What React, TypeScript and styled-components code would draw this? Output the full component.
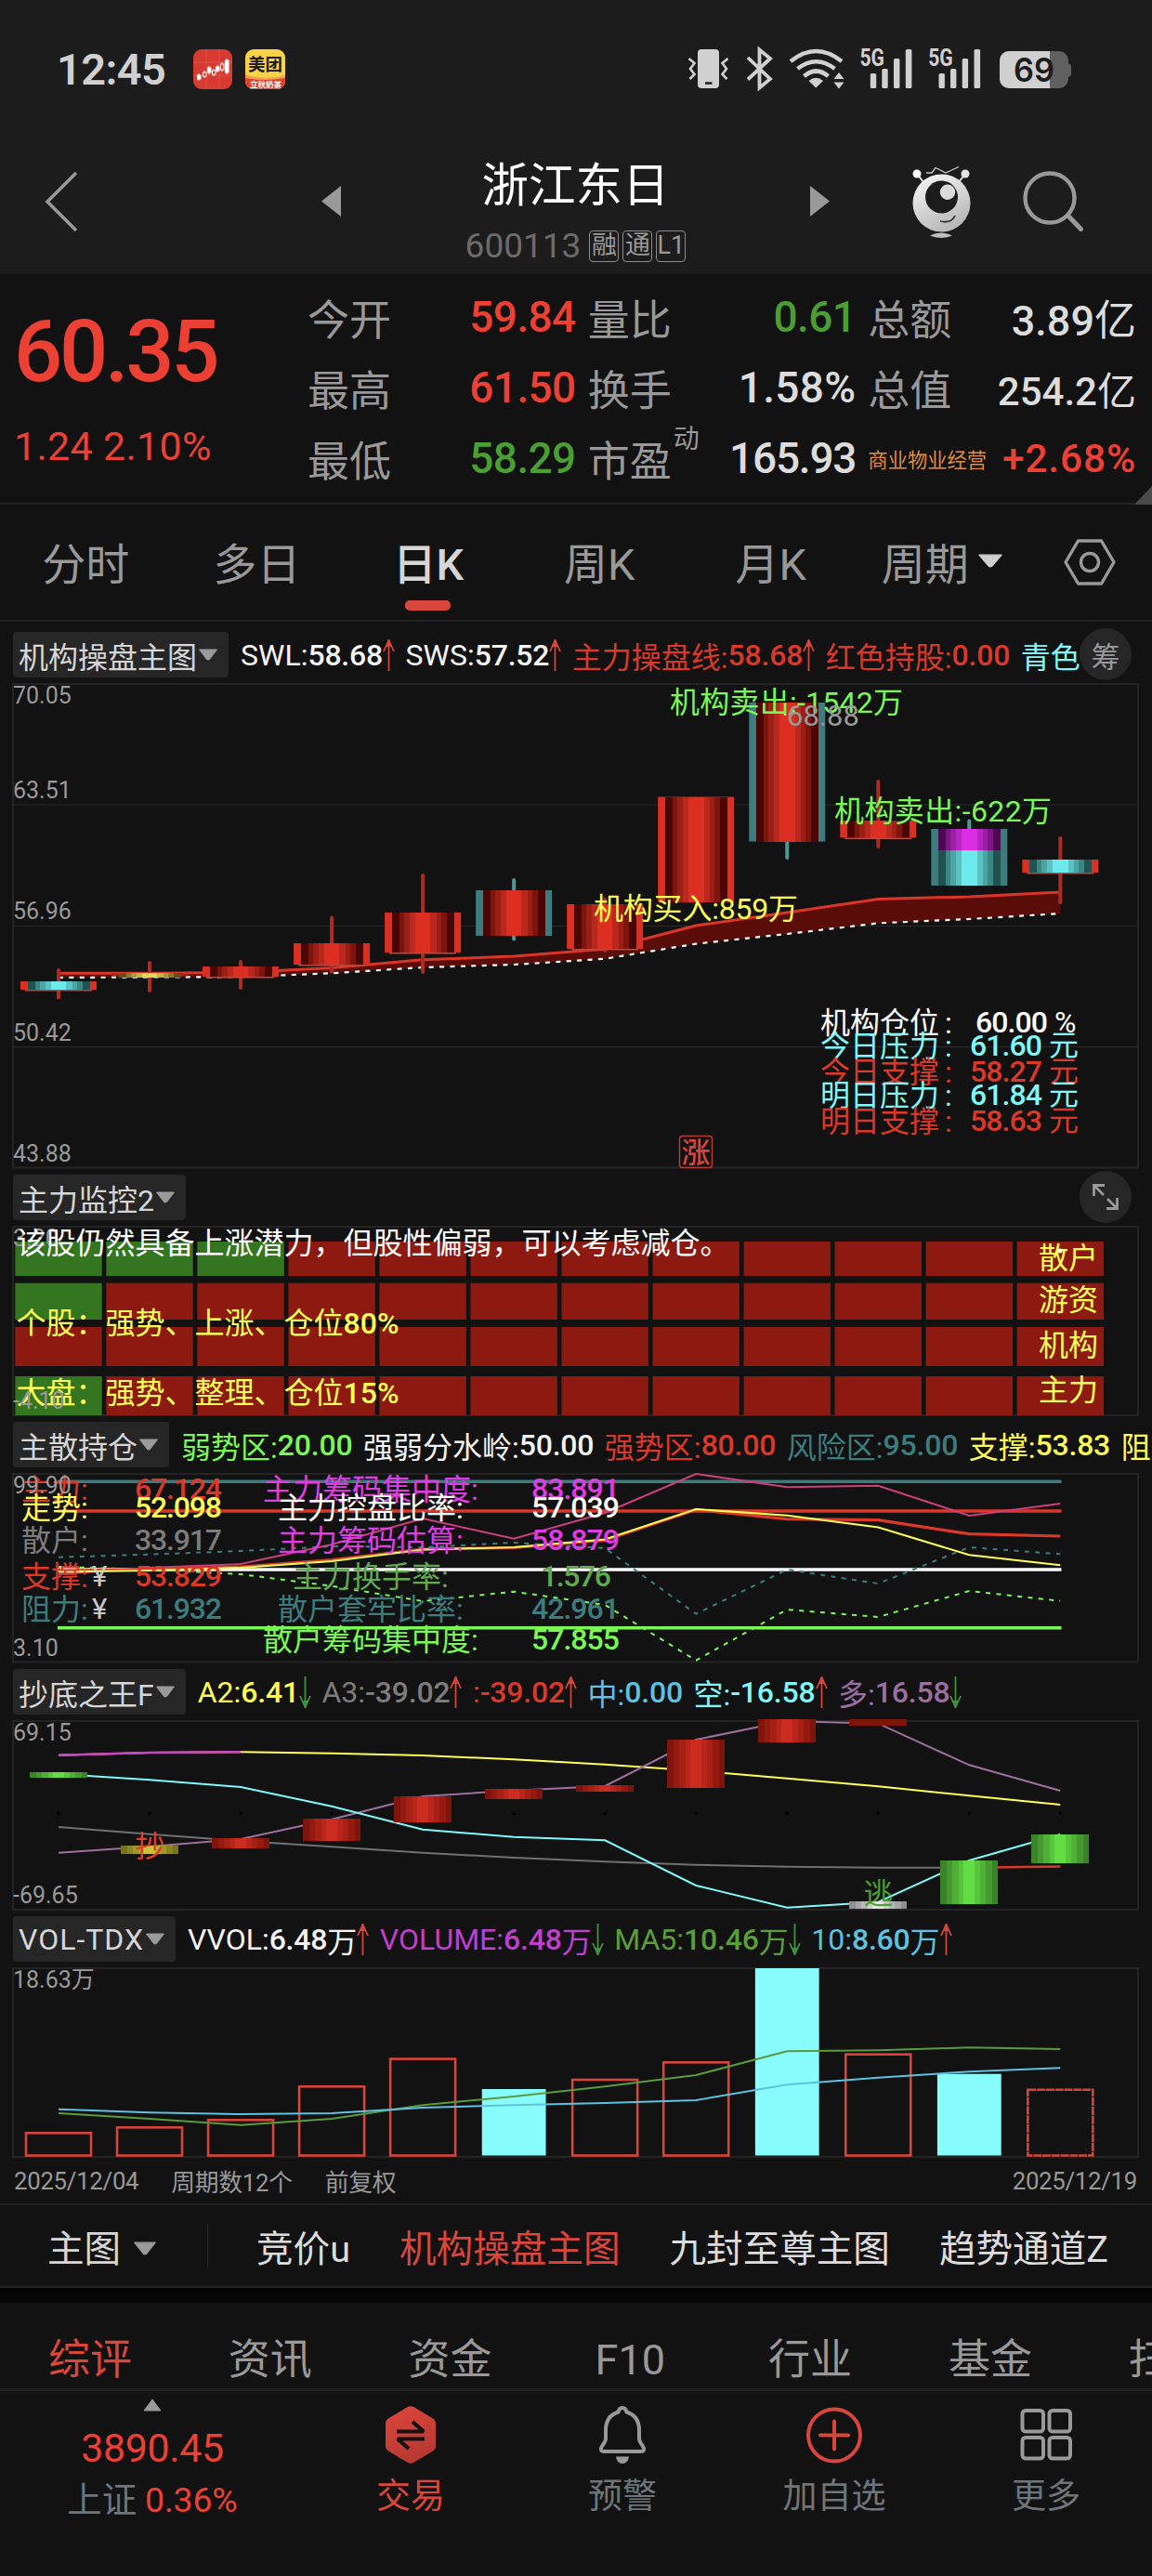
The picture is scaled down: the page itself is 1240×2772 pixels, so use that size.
import { Fragment, ReactNode } from "react";
import { createGlobalStyle, styled } from "styled-components";

const colors = {
  header: "#1c1c1c",
  page: "#121212",
  line: "#232323",
  chip: "#262626",
  text: "#d6d6d6",
  muted: "#999999",
  dim: "#6b6b6b",
  slate: "#6d757a",
  red: "#ec4034",
  softRed: "#d8463c",
  lineRed: "#dc382a",
  green: "#4a9e32",
  lime: "#7af855",
  yellow: "#ffff55",
  cyan: "#80f8fa",
  teal: "#3d7c7e",
  sky: "#5fc1e0",
  magenta: "#e03ce6",
  purple: "#9c6f9f",
  orange: "#df8b40",
};

const fontStack = `Roboto, "Noto Sans CJK SC", sans-serif`;

const GlobalStyle = createGlobalStyle`
  * {
    box-sizing: border-box;
  }

  body {
    margin: 0;
    background: ${colors.page};
    font-family: ${fontStack};
  }

  svg {
    display: block;
    flex: none;
  }
`;

const Page = styled.div`
  width: 1240px;
  height: 2772px;
  overflow: hidden;
  display: flex;
  flex-direction: column;
  background: ${colors.page};
  color: ${colors.text};
  white-space: nowrap;
`;

const StatusBar = styled.div`
  height: 148px;
  padding: 0 87px 0 61px;
  display: flex;
  align-items: center;
  background: ${colors.header};

  svg {
    overflow: visible;
  }
`;

const Clock = styled.div`
  width: 147px;
  font-size: 47px;
  font-weight: 600;
  letter-spacing: -0.6px;
  color: #d0d0d0;
`;

const StatusIcons = styled.div`
  margin-left: auto;
  display: flex;
  align-items: center;
`;

const AppIcons = styled.div`
  display: flex;
  gap: 14px;
`;

const Header = styled.header`
  height: 147px;
  padding: 0 74px 10px 47px;
  display: flex;
  align-items: center;
  background: ${colors.header};
`;

const StockNav = styled.div`
  margin-left: 261px;
  width: 547px;
  display: flex;
  align-items: center;
  justify-content: space-between;
`;

const StockName = styled.div`
  display: flex;
  flex-direction: column;
  align-items: center;
`;

const Title = styled.div`
  font-size: 50.5px;
  line-height: 60px;
  margin-top: 23px;
  color: #fff;
`;

const Code = styled.div`
  display: flex;
  align-items: center;
  gap: 4px;
  margin-top: 13px;
  font-size: 37px;
  line-height: 44px;
  color: ${colors.dim};

  & > span:first-child {
    margin-right: 5px;
  }
`;

const Badge = styled.span`
  width: 32px;
  height: 34px;
  border: 1.5px solid #8a8a8a;
  border-radius: 4px;
  font-size: 27px;
  line-height: 31px;
  text-align: center;
  color: ${colors.muted};
`;

const HeaderIcons = styled.div`
  margin-left: auto;
  display: flex;
  align-items: center;
  gap: 55px;
`;

const Quote = styled.section`
  height: 248px;
  padding: 8px 17px 0 15px;
  display: flex;
  border-bottom: 2px solid ${colors.line};
  position: relative;
`;

const Corner = styled.svg`
  position: absolute;
  right: 0;
  bottom: -2px;
`;

const PriceBlock = styled.div`
  width: 316px;
  padding-top: 26px;
  color: ${colors.red};
`;

const Price = styled.div`
  font-size: 92px;
  font-weight: 500;
  line-height: 100px;
  letter-spacing: -3.3px;
`;

const Change = styled.div`
  margin-top: 26px;
  font-size: 43px;
  line-height: 50px;
  letter-spacing: 0.3px;
`;

const StatGrid = styled.div`
  flex: 1;
  display: grid;
  grid-template-columns: repeat(3, 1fr);
  grid-auto-rows: 76px;
  column-gap: 13px;
`;

const Stat = styled.div`
  display: flex;
  align-items: center;
  justify-content: space-between;
`;

const StatName = styled.div<{ $small?: boolean }>`
  display: flex;
  font-size: ${p => (p.$small ? 21.3 : 45)}px;
  color: ${p => (p.$small ? colors.orange : colors.muted)};

  sup {
    margin: -8px 0 0 2px;
    font-size: 28px;
    line-height: 40px;
  }
`;

const StatValue = styled.div<{ $color: string; $size?: number; $spacing?: number }>`
  font-size: ${p => p.$size ?? 46}px;
  font-weight: 500;
  letter-spacing: ${p => p.$spacing ?? -0.6}px;
  color: ${p => p.$color};

  span {
    font-weight: 400;
  }
`;

const PeriodTabs = styled.nav`
  height: 126px;
  display: flex;
  border-bottom: 2px solid ${colors.line};
`;

const PeriodTab = styled.div<{ $active?: boolean }>`
  width: 184.4px;
  display: flex;
  align-items: center;
  justify-content: center;
  gap: 9px;
  padding-bottom: 4px;
  font-size: 47px;
  font-weight: ${p => (p.$active ? 500 : 400)};
  color: ${p => (p.$active ? colors.text : colors.muted)};
  position: relative;

  &::after {
    content: "";
    display: ${p => (p.$active ? "block" : "none")};
    position: absolute;
    bottom: 10px;
    width: 49px;
    height: 11px;
    border-radius: 5px;
    background: ${colors.softRed};
  }
`;

const SettingsTab = styled.div`
  flex: 1;
  display: flex;
  align-items: center;
  justify-content: center;
`;

const IndicatorBar = styled.div<{ $height: number; $top: number }>`
  height: ${p => p.$height}px;
  padding: ${p => p.$top}px 0 0 14px;
  display: flex;
  align-items: flex-start;
  position: relative;
`;

const Chip = styled.div<{ $spacing?: number }>`
  height: 49px;
  padding: 0 11px 0 6px;
  display: flex;
  align-items: center;
  gap: 1px;
  border-radius: 4px;
  background: ${colors.chip};
  font-size: 32px;
  letter-spacing: ${p => p.$spacing ?? 0}px;
`;

const Legend = styled.div`
  margin-left: 13px;
  height: 49px;
  display: flex;
  align-items: center;
  gap: 11.5px;
`;

const LegendItem = styled.div<{ $color: string }>`
  display: flex;
  align-items: center;
  font-size: 32px;
  color: ${p => p.$color};

  b {
    font-weight: 500;
    letter-spacing: -0.2px;
  }
`;

const RoundButton = styled.div<{ $top: number }>`
  position: absolute;
  right: 22px;
  top: ${p => p.$top}px;
  width: 56px;
  height: 56px;
  border-radius: 50%;
  display: flex;
  align-items: center;
  justify-content: center;
  background: ${colors.chip};
  color: ${colors.muted};
  font-size: 31px;
`;

const Plot = styled.svg`
  width: 1240px;
  overflow: visible;
  font-family: ${fontStack};
`;

const DateRow = styled.div`
  height: 49px;
  padding: 0 16px 0 15px;
  display: flex;
  align-items: center;
  font-size: 25.8px;
  letter-spacing: -0.3px;
  color: ${colors.muted};

  span {
    margin-right: 35px;
  }

  span:last-child {
    margin: 0 0 0 auto;
  }
`;

const Schemes = styled.div`
  height: 91px;
  display: flex;
  align-items: center;
  border-top: 2px solid ${colors.line};
  border-bottom: 2px solid ${colors.line};
  font-size: 39.6px;
`;

const SchemePicker = styled.div`
  width: 224px;
  height: 47px;
  padding-left: 51px;
  display: flex;
  align-items: center;
  gap: 13px;
  border-right: 1px solid #2a2a2a;

  svg {
    margin-top: 5px;
  }
`;

const SchemeList = styled.div`
  display: flex;
  gap: 53px;
  padding-left: 52px;
`;

const Scheme = styled.div<{ $active?: boolean }>`
  color: ${p => (p.$active ? colors.softRed : "#dcdcdc")};
`;

const Band = styled.div`
  height: 16px;
  background: #060606;
`;

const InfoTabs = styled.nav`
  height: 95px;
  padding-top: 31px;
  display: flex;
  border-bottom: 3px solid #1f1f1f;
`;

const InfoTab = styled.div<{ $active?: boolean }>`
  flex: 0 0 193.8px;
  text-align: center;
  font-size: 45px;
  line-height: 61px;
  color: ${p => (p.$active ? colors.softRed : colors.muted)};
`;

const BottomBar = styled.footer`
  flex: 1;
  display: flex;
`;

const IndexBox = styled.div`
  width: 328px;
  padding-top: 8px;
  display: flex;
  flex-direction: column;
  align-items: center;
`;

const IndexValue = styled.div`
  margin-top: 14px;
  font-size: 43px;
  line-height: 50px;
  letter-spacing: -0.4px;
  color: ${colors.red};
`;

const IndexChange = styled.div`
  margin-top: 6px;
  font-size: 37.5px;
  line-height: 50px;
  letter-spacing: -0.2px;
  color: ${colors.slate};

  span {
    color: ${colors.red};
  }
`;

const NavItem = styled.div<{ $active?: boolean }>`
  flex: 1;
  padding-top: 15px;
  display: flex;
  flex-direction: column;
  align-items: center;
  gap: 8px;
  font-size: 37px;
  line-height: 54px;
  color: ${p => (p.$active ? colors.softRed : colors.slate)};
`;

function Caret({ width = 22, height = 13, color = "#9a9a9a" }) {
  return (
    <svg
      width={width}
      height={height}
      viewBox="0 0 22 13"
      preserveAspectRatio="none"
    >
      <path
        d="M1.5 1h19l-8 10.5q-1.5 1-3 0z"
        fill={color}
        stroke={color}
        strokeLinejoin="round"
      />
    </svg>
  );
}

function Arrow({ down }: { down?: boolean }) {
  const color = down ? "#3f9140" : "#d4453b";
  return (
    <svg width="13" height="34" viewBox="0 0 13 34">
      <g
        transform={down ? "rotate(180 6.5 17)" : undefined}
        fill="none"
        stroke={color}
        strokeWidth="1.8"
      >
        <path d="M6.5 1v33M1 13L6.5 1l5.5 12" />
        <path d="M4.5 7l2-6 2 6z" fill={color} />
      </g>
    </svg>
  );
}

function StockAppIcon() {
  const bars = [
    [5, 28, 4],
    [11, 25, 4],
    [16, 20, 5],
    [21, 23, 4],
    [25, 19, 4],
    [30, 16, 6],
    [35, 12, 13],
  ];
  return (
    <svg width="42" height="43" viewBox="0 0 42 43">
      <rect width="42" height="43" rx="9" fill="#d63a31" />
      <path d="M0 14h42M0 28h42M14 0v43M28 0v43" stroke="#df5047" />
      {bars.map(([x, y, h], i) => (
        <g key={x} stroke="#fff">
          <path d={`M${x + 1} ${y - 2}v${h + 4}`} />
          <rect
            x={x - 0.5}
            y={y}
            width="3.5"
            height={h}
            fill={i % 2 ? "#d63a31" : "#fff"}
          />
        </g>
      ))}
    </svg>
  );
}

function FoodAppIcon() {
  return (
    <svg width="43" height="43" viewBox="0 0 43 43">
      <clipPath id="food">
        <rect width="43" height="43" rx="9" />
      </clipPath>
      <g clipPath="url(#food)" fontFamily={fontStack}>
        <rect width="43" height="43" fill="#fbd347" />
        <path d="M0 27q20 7 43 1v15H0z" fill="#f2a057" />
        <path d="M0 31q20 4 43 0v12H0z" fill="#e2402f" />
        <text x="3" y="23" fontSize="18.5" fontWeight="700" fill="#1c1c1c">
          美团
        </text>
        <text x="5" y="41" fontSize="8.5" fontWeight="700" fill="#fff">
          立秋奶茶
        </text>
      </g>
    </svg>
  );
}

function SystemIcons() {
  const light = "#d0d0d0";
  return (
    <svg width="414" height="52" viewBox="740 48 414 52">
      <g fill="none" stroke={light} strokeWidth="2.6">
        <path d="M742.5 63l6 5-4.500 6 4.500 6-5 5" />
        <path d="M784.5 63l-6 5 4.500 6-4.500 6 5 5" />
      </g>
      <rect x="752" y="53" width="23" height="42" rx="4" fill={light} />
      <path d="M760 89.5h7.5" stroke={colors.header} strokeWidth="2.5" />

      <path
        d="M806 62l24 23-11.5 9.5v-41L830 63l-24 22.5"
        fill="none"
        stroke={light}
        strokeWidth="3.8"
      />

      <g fill="none" stroke={light} strokeWidth="4.6">
        <path d="M852 66q27.5-22 55 0" />
        <path d="M859.5 74q20-15.500 40 0" />
        <path d="M866.5 82q13-11 26 0" />
      </g>
      <path d="M871.5 87q8-6.500 15.500 0l-7.700 7.500z" fill={light} />
      <path d="M898.5 85l5.500-7 5.500 7zM898.5 88.500l5.500 7 5.500-7z" fill={light} />

      {[0, 73.7].map(dx => (
        <g key={dx} transform={`translate(${dx} 0)`} fill={light}>
          <text
            x="926.5"
            y="70.5"
            fontSize="25"
            fontWeight="700"
            textLength="26.5"
            lengthAdjust="spacingAndGlyphs"
            fontFamily={fontStack}
          >
            5G
          </text>
          <rect x="937.8" y="79" width="6.4" height="16" rx="1.5" />
          <rect x="950.3" y="74" width="6.4" height="21" rx="1.5" />
          <rect x="963" y="63" width="6.4" height="32" rx="1.5" />
          <rect x="975.8" y="53" width="6.6" height="42" rx="1.5" />
        </g>
      ))}

      <clipPath id="battery">
        <rect x="1077" y="55" width="74" height="40" rx="10" />
      </clipPath>
      <rect x="1146" y="68.5" width="8" height="14" rx="3" fill="#606060" />
      <g clipPath="url(#battery)">
        <rect x="1077" y="55" width="74" height="40" fill="#606060" />
        <rect x="1077" y="55" width="54" height="40" fill={light} />
      </g>
      <text
        x="1092"
        y="87.5"
        fontSize="36"
        fontWeight="600"
        fill={colors.header}
        textLength="44"
        lengthAdjust="spacingAndGlyphs"
        fontFamily="Inter, sans-serif"
      >
        69
      </text>
    </svg>
  );
}

function RobotIcon() {
  return (
    <svg width="64" height="80" viewBox="981 176 64 80">
      <linearGradient id="robot" x1="0.2" y1="0" x2="0.7" y2="1">
        <stop offset="0" stopColor="#f4f4f4" />
        <stop offset="1" stopColor="#b4b4b4" />
      </linearGradient>
      <path
        d="M997 185h6l4-5.500 11 5.500 14-6.500"
        fill="none"
        stroke="#c8c8c8"
        strokeWidth="1.3"
      />
      <path d="M987 186l7 9M1039 186l-7 9" stroke="#e4e4e4" strokeWidth="2" />
      <circle cx="987" cy="186" r="4.5" fill="#fff" />
      <circle cx="1039" cy="186" r="4.5" fill="#e4e4e4" />
      <circle cx="1013.5" cy="217.5" r="31" fill="url(#robot)" />
      <circle cx="1013.5" cy="211" r="17.5" fill={colors.header} />
      <circle cx="1020" cy="205.7" r="8.2" fill="#dadada" />
      <path
        d="M1012 237q12 3 16-6"
        fill="none"
        stroke="#333"
        strokeWidth="1.8"
      />
      <path d="M1001 252.5q12-6 24 0-12 5-24 0z" fill="#bdbdbd" />
    </svg>
  );
}

const step = 98.03;
const cx = (i: number) => 63 + step * i;
const points = (ys: number[], from = 0) =>
  ys.map((y, i) => `${cx(i + from).toFixed(1)},${y}`).join(" ");

interface LineProps {
  ys: number[];
  color: string;
  width?: number;
  dash?: string;
  from?: number;
}

function Line({ ys, color, width = 2, dash, from }: LineProps) {
  return (
    <polyline
      points={points(ys, from)}
      fill="none"
      stroke={color}
      strokeWidth={width}
      strokeDasharray={dash}
    />
  );
}

interface MarkProps {
  x: number;
  y: number;
  color: string;
  size?: number;
  weight?: number;
  length?: number;
  children: ReactNode;
}

function Mark({ x, y, color, size = 32, weight = 400, length, children }: MarkProps) {
  return (
    <text
      x={x}
      y={y}
      fill={color}
      fontSize={size}
      fontWeight={weight}
      textLength={length}
    >
      {children}
    </text>
  );
}

function Scale({ y, children }: { y: number; children: string }) {
  return (
    <Mark x={14} y={y} color={colors.muted} size={25}>
      {children}
    </Mark>
  );
}

function Frame({ top, bottom }: { top: number; bottom: number }) {
  return (
    <rect
      x="14"
      y={top}
      width="1211"
      height={bottom - top}
      fill="none"
      stroke="#242424"
      strokeWidth="2"
    />
  );
}

// Half-width and colour of each band, from the outside in
const bodyWidths = [33.5, 25.5, 20, 14.5, 8.3];
const bodyTones = {
  red: ["#4a0603", "#7b150d", "#9c1e14", "#b8281c", "#dc2f22"],
  cyan: ["#225250", "#3b8583", "#4aa5a3", "#59c2c2", "#6ceaec"],
  yellow: ["#6b4a1c", "#8a7a2c", "#a89838", "#c4b444", "#e6d650"],
  magenta: ["#4c0952", "#7d1685", "#9c1ea5", "#b825c4", "#da2de4"],
};

const barWidths = [31, 24.5, 18, 11.5, 6];
const barTones = {
  red: ["#7d150d", "#96190f", "#a52116", "#b8261b", "#cc2b1f"],
  green: ["#388427", "#45992e", "#4eb036", "#58c63c", "#62de44"],
  yellow: ["#77741f", "#8a8424", "#9e982a", "#b3ac30", "#cac43a"],
  gray: ["#8f8f8f", "#a4a4a4", "#b8b8b8", "#cdcdcd", "#e4e4e4"],
  dark: ["#7d150d"],
};

interface StripesProps {
  i: number;
  top: number;
  bottom: number;
  widths: number[];
  tones: string[];
}

function Stripes({ i, top, bottom, widths, tones }: StripesProps) {
  return (
    <>
      {tones.map((tone, k) => (
        <rect
          key={k}
          x={cx(i) - widths[k]}
          y={top}
          width={widths[k] * 2}
          height={bottom - top}
          fill={tone}
          shapeRendering="crispEdges"
        />
      ))}
    </>
  );
}

interface CandleData {
  high: number;
  low: number;
  top: number;
  bottom: number;
  tone: keyof typeof bodyTones;
  edge?: string;
}

const candles: CandleData[] = [
  { high: 1044, low: 1073.5, top: 1056, bottom: 1065, tone: "cyan" },
  { high: 1036, low: 1066, top: 1046.5, bottom: 1051.5, tone: "yellow" },
  { high: 1035, low: 1063, top: 1040, bottom: 1051, tone: "red" },
  { high: 987.5, low: 1045.5, top: 1015, bottom: 1038, tone: "red" },
  { high: 942, low: 1046, top: 982, bottom: 1025, tone: "red" },
  { high: 947, low: 1010.5, top: 958, bottom: 1007, tone: "red", edge: colors.teal },
  { high: 968, low: 1023, top: 973, bottom: 1021, tone: "red" },
  { high: 859.5, low: 969, top: 857.5, bottom: 971, tone: "red" },
  { high: 758, low: 923, top: 756, bottom: 905.5, tone: "red", edge: colors.teal },
  { high: 841, low: 911, top: 883, bottom: 901.5, tone: "red" },
  { high: 883.5, low: 951, top: 892, bottom: 953, tone: "cyan", edge: colors.teal },
  { high: 902, low: 971, top: 925, bottom: 939, tone: "cyan" },
];

function Candle({ i, c }: { i: number; c: CandleData }) {
  const wick = c.edge ? "#4c9896" : "#aa2c23";
  return (
    <g>
      <path
        d={`M${cx(i)} ${c.high}V${c.low}`}
        stroke={wick}
        strokeWidth="4"
        strokeLinecap="round"
      />
      {i !== 1 && (
        <rect
          x={cx(i) - 41}
          y={c.top}
          width="82"
          height={c.bottom - c.top}
          fill={c.edge ?? "#dc2f22"}
        />
      )}
      {i === 1 && (
        <rect x={cx(i) - 41} y={c.top + 1} width="82" height="3" fill="#a3241a" />
      )}
      <Stripes
        i={i}
        top={c.top}
        bottom={c.bottom}
        widths={bodyWidths}
        tones={bodyTones[c.tone]}
      />
      {!c.edge && i !== 1 && i !== 7 && (
        <path
          d={`M${cx(i) - 36} ${c.bottom + 0.8}h72`}
          stroke="#b8473f"
          strokeWidth="1.5"
        />
      )}
    </g>
  );
}

const swl = [1047.3, 1047.3, 1046.5, 1041.6, 1032.8, 1029, 1021.3, 996, 982, 967.4, 965, 960];
const sws = [1052, 1051.5, 1051.2, 1047.3, 1041, 1038, 1031.7, 1015.6, 1005, 993.4, 989, 983];

const levels = [
  { name: "机构仓位", value: "60.00", unit: "%", y: 1111, color: "#fff", x: 1050 },
  { name: "今日压力", value: "61.60", unit: "元", y: 1136, color: colors.cyan, x: 1044 },
  { name: "今日支撑", value: "58.27", unit: "元", y: 1164, color: colors.lineRed, x: 1044 },
  { name: "明日压力", value: "61.84", unit: "元", y: 1189, color: colors.cyan, x: 1044 },
  { name: "明日支撑", value: "58.63", unit: "元", y: 1217, color: colors.lineRed, x: 1044 },
];

function MainChart() {
  return (
    <Plot height="522" viewBox="0 735 1240 522">
      <Frame top={736} bottom={1256.5} />
      <path d="M14 866H1225M14 996.5H1225M14 1126.5H1225" stroke="#2a2a2a" />
      <polygon
        points={`${points(swl)} ${points(sws).split(" ").reverse().join(" ")}`}
        fill="#5a0d08"
      />
      <Line ys={sws} color="#fff" width={2.2} dash="5 6.4" />
      <Line ys={swl} color="#dd3428" width={3} />
      {candles.map((c, i) => (
        <Candle key={i} i={i} c={c} />
      ))}
      <Stripes
        i={10}
        top={892}
        bottom={915}
        widths={bodyWidths}
        tones={bodyTones.magenta}
      />
      <Scale y={757}>70.05</Scale>
      <Scale y={859}>63.51</Scale>
      <Scale y={989}>56.96</Scale>
      <Scale y={1120}>50.42</Scale>
      <Scale y={1250}>43.88</Scale>
      <Mark x={721} y={767} color={colors.lime} length={251}>
        机构卖出:-1542万
      </Mark>
      <Mark x={847} y={780.5} color={colors.muted} size={31}>
        68.88
      </Mark>
      <Mark x={898} y={884} color={colors.lime} length={234}>
        机构卖出:-622万
      </Mark>
      <Mark x={639} y={989} color={colors.yellow} length={220}>
        机构买入:859万
      </Mark>
      {levels.map(l => (
        <Fragment key={l.name}>
          <Mark x={883} y={l.y + 1} color={l.color}>
            {l.name}
          </Mark>
          <Mark x={1017} y={l.y + 1} color={l.color}>
            :
          </Mark>
          <Mark x={l.x} y={l.y} color={l.color} weight={500} length={78}>
            {l.value}
          </Mark>
          <Mark x={l.unit === "%" ? 1135 : 1129} y={l.y} color={l.color}>
            {l.unit}
          </Mark>
        </Fragment>
      ))}
      <rect
        x="731.5"
        y="1222.5"
        width="35"
        height="34"
        rx="3"
        fill="none"
        stroke="#b83a32"
        strokeWidth="1.5"
      />
      <Mark x={733.5} y={1251} color="#d2473d" size={31} weight={500}>
        涨
      </Mark>
    </Plot>
  );
}

const monitorRows = [
  { y: 1336, height: 37, green: 3, name: "散户", textY: 1365 },
  { y: 1380.7, height: 39.3, green: 1, name: "游资", textY: 1410 },
  { y: 1428, height: 42, green: 0, name: "机构", textY: 1459 },
  { y: 1481, height: 42, green: 1, name: "主力", textY: 1507 },
];

function MonitorChart() {
  return (
    <Plot height="205" viewBox="0 1319 1240 205">
      <Frame top={1320} bottom={1523} />
      {monitorRows.map(row => (
        <g key={row.name}>
          {candles.map((_, i) => (
            <rect
              key={i}
              x={cx(i) - 46.7}
              y={row.y}
              width="93.4"
              height={row.height}
              fill={i < row.green ? "#33761f" : "#8c1a10"}
            />
          ))}
          <Mark x={1118} y={row.textY} color={colors.yellow}>
            {row.name}
          </Mark>
        </g>
      ))}
      <circle cx="1141" cy="1346" r="2.5" fill="#fff" />
      <Scale y={1341}>3.20</Scale>
      <Mark x={17.5} y={1349} color="#fff">
        该股仍然具备上涨潜力，但股性偏弱，可以考虑减仓。
      </Mark>
      <Mark x={17.5} y={1434.5} color={colors.yellow}>
        个股：强势、上涨、仓位<tspan fontWeight="500">80%</tspan>
      </Mark>
      <Mark x={17.5} y={1509.5} color={colors.yellow}>
        大盘：强势、整理、仓位<tspan fontWeight="500">15%</tspan>
      </Mark>
      <Scale y={1515.6}>-4.10</Scale>
    </Plot>
  );
}

const holdings = [
  { name: "主力:", value: "67.124", y: 1613, color: colors.lineRed },
  { name: "走势:", value: "52.098", y: 1633, color: colors.yellow },
  { name: "散户:", value: "33.917", y: 1668, color: "#7c7c7c" },
  { name: "支撑:", value: "53.829", y: 1707, color: colors.lineRed, yen: true },
  { name: "阻力:", value: "61.932", y: 1742, color: colors.teal, yen: true },
];

const ratios = [
  { name: "主力筹码集中度:", value: "83.891", x: 283, y: 1613, color: colors.magenta },
  { name: "主力控盘比率:", value: "57.039", x: 299, y: 1633, color: "#fff" },
  { name: "主力筹码估算:", value: "58.879", x: 299, y: 1668, color: colors.magenta },
  { name: "主力换手率:", value: "1.576", x: 315, y: 1707, color: "#62aa52" },
  { name: "散户套牢比率:", value: "42.961", x: 299, y: 1742, color: colors.teal },
  { name: "散户筹码集中度:", value: "57.855", x: 283, y: 1775, color: colors.lime },
];

const zones = [
  { y: 1594.3, color: colors.teal },
  { y: 1626, color: colors.lineRed },
  { y: 1689, color: "#fff" },
  { y: 1751.7, color: colors.lime },
];

function HoldingChart() {
  return (
    <Plot height="205" viewBox="0 1585 1240 205">
      <Frame top={1586} bottom={1788.5} />
      {zones.map(z => (
        <path key={z.y} d={`M62 ${z.y}H1142.5`} stroke={z.color} strokeWidth="3.4" />
      ))}
      <Line
        ys={[1675.7, 1672.7, 1669, 1664, 1665, 1660, 1666, 1736.7, 1689, 1704, 1665, 1672.3]}
        color={colors.teal}
        dash="5 6.4"
      />
      <Line
        ys={[1686, 1689, 1694, 1706.7, 1723, 1712.7, 1727, 1786.7, 1732, 1740, 1712, 1722.7]}
        color={colors.lime}
        dash="5 6.4"
      />
      <Line
        ys={[1694, 1687, 1683, 1662, 1634, 1655.7, 1628, 1586, 1600.3, 1598.7, 1631, 1618]}
        color="#cb3f7c"
      />
      <Line
        ys={[1690, 1689, 1686, 1678.5, 1667, 1665.5, 1657.5, 1624.5, 1634.7, 1635.7, 1650.7, 1653]}
        color={colors.lineRed}
        width={3.2}
      />
      <Line
        ys={[1691.5, 1690, 1687, 1680, 1667.5, 1665, 1656.5, 1624, 1630.7, 1643.5, 1673.3, 1684.3]}
        color={colors.yellow}
      />
      {holdings.map(h => (
        <Fragment key={h.name}>
          <Mark x={23} y={h.y + 1} color={h.color}>
            {h.name}
          </Mark>
          {h.yen && (
            <Mark x={99} y={h.y} color="#c8c8c8" size={31}>
              ¥
            </Mark>
          )}
          <Mark x={145} y={h.y} color={h.color} weight={500} length={94}>
            {h.value}
          </Mark>
        </Fragment>
      ))}
      {ratios.map(r => (
        <Fragment key={r.name}>
          <Mark x={r.x} y={r.y + 1} color={r.color}>
            {r.name}
          </Mark>
          <Mark
            x={r.value.length === 5 ? 582 : 572}
            y={r.y}
            color={r.color}
            weight={500}
            length={r.value.length === 5 ? 76 : 95}
          >
            {r.value}
          </Mark>
        </Fragment>
      ))}
      <Scale y={1607}>99.90</Scale>
      <Scale y={1781.5}>3.10</Scale>
    </Plot>
  );
}

const swingBars: [number, number, number, keyof typeof barTones][] = [
  [0, 1907, 1913, "green"],
  [1, 1986, 1995.3, "yellow"],
  [2, 1978, 1989.3, "red"],
  [3, 1957, 1981, "red"],
  [4, 1932.7, 1961, "red"],
  [5, 1925, 1936, "red"],
  [6, 1921, 1927.7, "red"],
  [7, 1872, 1924, "red"],
  [8, 1850, 1875, "red"],
  [9, 1850, 1857, "dark"],
  [9, 2045.7, 2054, "gray"],
  [10, 2002, 2049, "green"],
  [11, 1974, 2005, "green"],
];

function SwingChart() {
  const trend = [1888.7, 1886, 1885.3, 1886.7, 1889, 1893.3, 1898.7, 1905.5, 1913.7, 1922.3, 1932.3, 1942];
  return (
    <Plot height="205" viewBox="0 1851 1240 205">
      <Frame top={1852} bottom={2055} />
      {candles.map((_, i) => (
        <rect key={i} x={cx(i) - 1.5} y="1950" width="3" height="3" fill="#000" />
      ))}
      <Line ys={trend} color={colors.yellow} />
      <Line ys={trend.slice(0, 3)} color="#c844c4" width={2.6} />
      <Line
        ys={[1966, 1973.7, 1981, 1987.3, 1993.7, 1999, 2003.3, 2006.7, 2008.7, 2009.7, 2009.7]}
        color="#707070"
      />
      <Line ys={[2009.7, 2008.5]} from={10} color={colors.lineRed} width={2.6} />
      <Line
        ys={[1993.7, 1987, 1979, 1957.7, 1933, 1926.7, 1922, 1872, 1852, 1854.7, 1899.3, 1927]}
        color={colors.purple}
      />
      <Line
        ys={[1909, 1915.3, 1923, 1943.7, 1968.7, 1976.7, 1980.3, 2029, 2052.7, 2046.7, 2002, 1974]}
        color={colors.cyan}
      />
      {swingBars.map(([i, top, bottom, tone]) => (
        <Stripes
          key={`${i}-${top}`}
          i={i}
          top={top}
          bottom={bottom}
          widths={barWidths}
          tones={barTones[tone]}
        />
      ))}
      <Mark x={145.5} y={1998} color="#e23a2c">
        抄
      </Mark>
      <Mark x={929.5} y={2048.5} color={colors.green}>
        逃
      </Mark>
      <Scale y={1872.5}>69.15</Scale>
      <Scale y={2048}>-69.65</Scale>
    </Plot>
  );
}

const volumes = [
  { top: 2295.3 },
  { top: 2289.3 },
  { top: 2281.3 },
  { top: 2245.3 },
  { top: 2215.6 },
  { top: 2248, down: true },
  { top: 2238 },
  { top: 2219.3 },
  { top: 2118, down: true },
  { top: 2210.7 },
  { top: 2231.7, down: true },
  { top: 2248.7 },
];

function VolumeChart() {
  return (
    <Plot height="205" viewBox="0 2117 1240 205">
      <Frame top={2118} bottom={2321} />
      {volumes.map((v, i) =>
        v.down ? (
          <rect
            key={i}
            x={cx(i) - 34.4}
            y={v.top}
            width="68.8"
            height={2319.5 - v.top}
            fill="#88fdfe"
          />
        ) : (
          <rect
            key={i}
            x={cx(i) - 35}
            y={v.top}
            width="70"
            height={2319.5 - v.top}
            fill={colors.page}
            stroke="#d8443a"
            strokeWidth="2.6"
            strokeDasharray={i === 11 ? "9 0.8" : undefined}
          />
        )
      )}
      <Line
        ys={[2274, 2280, 2286.7, 2280, 2265.3, 2256, 2245.3, 2233, 2207.3, 2206.3, 2203.3, 2205]}
        color="#5a9a3c"
      />
      <Line
        ys={[2269.7, 2273.3, 2275, 2274, 2268, 2265.3, 2263, 2260, 2243.3, 2235.7, 2229.3, 2225.3]}
        color={colors.sky}
      />
      <Scale y={2139}>18.63万</Scale>
    </Plot>
  );
}

interface LegendEntry {
  name: string;
  value?: string;
  unit?: string;
  color: string;
  trend?: "up" | "down";
}

interface IndicatorProps {
  name: string;
  entries: LegendEntry[];
  height?: number;
  top?: number;
  spacing?: number;
  action?: ReactNode;
}

function Indicator({
  name,
  entries,
  height = 61,
  top = 6,
  spacing,
  action,
}: IndicatorProps) {
  return (
    <IndicatorBar $height={height} $top={top}>
      <Chip $spacing={spacing}>
        {name}
        <Caret />
      </Chip>
      <Legend>
        {entries.map(e => (
          <LegendItem key={e.name} $color={e.color}>
            {e.name}
            <b>{e.value}</b>
            {e.unit}
            {e.trend && <Arrow down={e.trend === "down"} />}
          </LegendItem>
        ))}
      </Legend>
      {action}
    </IndicatorBar>
  );
}

const white = "#f4f4f4";

const mainLegend: LegendEntry[] = [
  { name: "SWL:", value: "58.68", color: white, trend: "up" },
  { name: "SWS:", value: "57.52", color: white, trend: "up" },
  { name: "主力操盘线:", value: "58.68", color: colors.lineRed, trend: "up" },
  { name: "红色持股:", value: "0.00", color: colors.lineRed },
  { name: "青色", color: colors.cyan },
];

const holdingLegend: LegendEntry[] = [
  { name: "弱势区:", value: "20.00", color: colors.lime },
  { name: "强弱分水岭:", value: "50.00", color: white },
  { name: "强势区:", value: "80.00", color: colors.lineRed },
  { name: "风险区:", value: "95.00", color: colors.teal },
  { name: "支撑:", value: "53.83", color: colors.yellow },
  { name: "阻", color: colors.yellow },
];

const swingLegend: LegendEntry[] = [
  { name: "A2:", value: "6.41", color: colors.yellow, trend: "down" },
  { name: "A3:", value: "-39.02", color: "#7c7c7c", trend: "up" },
  { name: ":", value: "-39.02", color: colors.lineRed, trend: "up" },
  { name: "中:", value: "0.00", color: colors.sky },
  { name: "空:", value: "-16.58", color: colors.cyan, trend: "up" },
  { name: "多:", value: "16.58", color: colors.purple, trend: "down" },
];

const volumeLegend: LegendEntry[] = [
  { name: "VVOL:", value: "6.48", unit: "万", color: white, trend: "up" },
  { name: "VOLUME:", value: "6.48", unit: "万", color: "#c03fd0", trend: "down" },
  { name: "MA5:", value: "10.46", unit: "万", color: "#5a9e3a", trend: "down" },
  { name: "10:", value: "8.60", unit: "万", color: colors.sky, trend: "up" },
];

const schemes = ["竞价u", "机构操盘主图", "九封至尊主图", "趋势通道Z"];
const infoTabs = ["综评", "资讯", "资金", "F10", "行业", "基金", "扫雷"];

export default function App() {
  return (
    <Page>
      <GlobalStyle />
      <StatusBar>
        <Clock>12:45</Clock>
        <AppIcons>
          <StockAppIcon />
          <FoodAppIcon />
        </AppIcons>
        <StatusIcons>
          <SystemIcons />
        </StatusIcons>
      </StatusBar>

      <Header>
        <svg width="38" height="68" viewBox="0 0 38 68" fill="none">
          <path d="M35 3L4 34l31 31" stroke={colors.muted} strokeWidth="3.6" />
        </svg>
        <StockNav>
          <svg width="21" height="33" viewBox="0 0 21 33">
            <path d="M21 0v33L0 16.500z" fill={colors.muted} />
          </svg>
          <StockName>
            <Title>浙江东日</Title>
            <Code>
              <span>600113</span>
              <Badge>融</Badge>
              <Badge>通</Badge>
              <Badge>L1</Badge>
            </Code>
          </StockName>
          <svg width="21" height="33" viewBox="0 0 21 33">
            <path d="M0 0v33l21-16.500z" fill={colors.muted} />
          </svg>
        </StockNav>
        <HeaderIcons>
          <RobotIcon />
          <svg width="66" height="68" viewBox="1101 183 66 68" fill="none">
            <g stroke={colors.muted} strokeLinecap="round">
              <circle cx="1131" cy="213" r="26.5" strokeWidth="4.4" />
              <path d="M1151 232.500l13.500 14" strokeWidth="5" />
            </g>
          </svg>
        </HeaderIcons>
      </Header>

      <Quote>
        <PriceBlock>
          <Price>60.35</Price>
          <Change>1.24 2.10%</Change>
        </PriceBlock>
        <StatGrid>
          <Stat>
            <StatName>今开</StatName>
            <StatValue $color={colors.red}>59.84</StatValue>
          </Stat>
          <Stat>
            <StatName>量比</StatName>
            <StatValue $color={colors.green}>0.61</StatValue>
          </Stat>
          <Stat>
            <StatName>总额</StatName>
            <StatValue $color="#dcdcdc" $size={45} $spacing={0}>
              3.89<span>亿</span>
            </StatValue>
          </Stat>
          <Stat>
            <StatName>最高</StatName>
            <StatValue $color={colors.red}>61.50</StatValue>
          </Stat>
          <Stat>
            <StatName>换手</StatName>
            <StatValue $color="#dcdcdc" $spacing={0.3}>
              1.58%
            </StatValue>
          </Stat>
          <Stat>
            <StatName>总值</StatName>
            <StatValue $color="#dcdcdc" $size={42} $spacing={0}>
              254.2<span>亿</span>
            </StatValue>
          </Stat>
          <Stat>
            <StatName>最低</StatName>
            <StatValue $color={colors.green}>58.29</StatValue>
          </Stat>
          <Stat>
            <StatName>
              市盈<sup>动</sup>
            </StatName>
            <StatValue $color="#dcdcdc" $spacing={-1.2}>
              165.93
            </StatValue>
          </Stat>
          <Stat>
            <StatName $small>商业物业经营</StatName>
            <StatValue $color={colors.red} $size={42.5} $spacing={0.8}>
              +2.68%
            </StatValue>
          </Stat>
        </StatGrid>
        <Corner width="19" height="20" viewBox="0 0 19 20">
          <path d="M19 0v20H0z" fill="#4a4a4a" />
        </Corner>
      </Quote>

      <PeriodTabs>
        <PeriodTab>分时</PeriodTab>
        <PeriodTab>多日</PeriodTab>
        <PeriodTab $active>日K</PeriodTab>
        <PeriodTab>周K</PeriodTab>
        <PeriodTab>月K</PeriodTab>
        <PeriodTab>
          周期
          <Caret width={28} height={15} color="#cfcfcf" />
        </PeriodTab>
        <SettingsTab>
          <svg width="56" height="52" viewBox="0 0 56 52" fill="none">
            <g stroke={colors.muted} strokeWidth="3.4" strokeLinejoin="round">
              <path d="M15.5 3h25L54 26 40.5 49h-25L2 26z" />
              <circle cx="28" cy="26" r="9.5" />
            </g>
          </svg>
        </SettingsTab>
      </PeriodTabs>

      <Indicator
        name="机构操盘主图"
        entries={mainLegend}
        height={66}
        top={11}
        action={<RoundButton $top={7}>筹</RoundButton>}
      />
      <MainChart />

      <Indicator
        name="主力监控2"
        entries={[]}
        height={62}
        top={7}
        action={
          <RoundButton $top={3}>
            <svg width="30" height="30" viewBox="0 0 30 30" fill="none">
              <g stroke={colors.muted} strokeWidth="2.8">
                <path d="M2.5 14V2.500H14M2.5 2.500L13 13" />
                <path d="M27.5 16v11.500H16M27.5 27.500L17 17" />
              </g>
            </svg>
          </RoundButton>
        }
      />
      <MonitorChart />

      <Indicator name="主散持仓" entries={holdingLegend} />
      <HoldingChart />

      <Indicator name="抄底之王F" entries={swingLegend} />
      <SwingChart />

      <Indicator name="VOL-TDX" entries={volumeLegend} spacing={1} />
      <VolumeChart />

      <DateRow>
        <span>2025/12/04</span>
        <span>周期数12个</span>
        <span>前复权</span>
        <span>2025/12/19</span>
      </DateRow>

      <Schemes>
        <SchemePicker>
          主图
          <Caret width={26} height={15} />
        </SchemePicker>
        <SchemeList>
          {schemes.map((name, i) => (
            <Scheme key={name} $active={i === 1}>
              {name}
            </Scheme>
          ))}
        </SchemeList>
      </Schemes>
      <Band />

      <InfoTabs>
        {infoTabs.map((name, i) => (
          <InfoTab key={name} $active={i === 0}>
            {name}
          </InfoTab>
        ))}
      </InfoTabs>

      <BottomBar>
        <IndexBox>
          <svg width="22" height="14" viewBox="0 0 22 14">
            <path
              d="M11 1l9 12H2z"
              fill={colors.muted}
              stroke={colors.muted}
              strokeLinejoin="round"
            />
          </svg>
          <IndexValue>3890.45</IndexValue>
          <IndexChange>
            上证 <span>0.36%</span>
          </IndexChange>
        </IndexBox>
        <NavItem $active>
          <svg width="56" height="64" viewBox="0 0 56 64">
            <linearGradient id="trade" x1="0.3" y1="0" x2="0.7" y2="1">
              <stop offset="0" stopColor="#dc453b" />
              <stop offset="1" stopColor="#b23831" />
            </linearGradient>
            <path
              d="M24 2.500q4-2.500 8 0l20 12q3 2 3 5.500v24q0 3.500-3 5.500l-20 12q-4 2.500-8 0l-20-12Q1 47.500 1 44V20q0-3.500 3-5.500z"
              fill="url(#trade)"
            />
            <g fill="none" stroke={colors.page} strokeWidth="4.2">
              <path d="M13 28.500h29L30 18" strokeLinejoin="bevel" />
              <path d="M43 36.500H14L26 47" strokeLinejoin="bevel" />
            </g>
          </svg>
          交易
        </NavItem>
        <NavItem>
          <svg width="56" height="64" viewBox="0 0 56 64" fill="none">
            <path
              d="M28 3q3.500 0 4.500 4.500Q46 12 46 27v9q0 3 3.500 7.500 4 6.500-2 6.500h-39q-6 0-2-6.500Q10 39 10 36v-9Q10 12 23.500 7.500 24.500 3 28 3z"
              stroke={colors.muted}
              strokeWidth="4"
              strokeLinejoin="round"
            />
            <path d="M21 55.500h14q-1 7.500-7 7.500t-7-7.500z" fill={colors.muted} />
          </svg>
          预警
        </NavItem>
        <NavItem>
          <svg width="60" height="64" viewBox="0 0 60 64" fill="none">
            <g stroke={colors.softRed} strokeWidth="4">
              <circle cx="30" cy="32.5" r="28" />
              <path d="M15 32.500h30M30 17.500v30" strokeLinecap="round" />
            </g>
          </svg>
          加自选
        </NavItem>
        <NavItem>
          <svg width="56" height="64" viewBox="0 0 56 64" fill="none">
            <g stroke={colors.muted} strokeWidth="4">
              <rect x="2.5" y="6" width="22.5" height="22.5" rx="3.5" />
              <rect x="31.5" y="6" width="22.5" height="22.5" rx="3.5" />
              <rect x="2.5" y="35" width="22.5" height="22.5" rx="3.5" />
              <rect x="31.5" y="35" width="22.5" height="22.5" rx="3.5" />
            </g>
          </svg>
          更多
        </NavItem>
      </BottomBar>
    </Page>
  );
}
